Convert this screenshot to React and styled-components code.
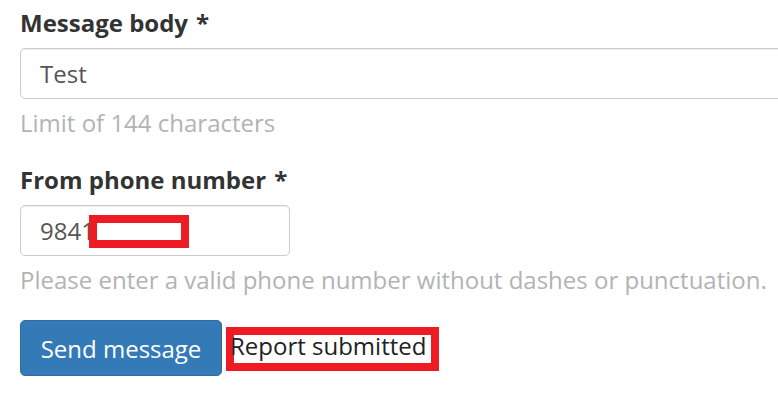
import React from "react";
import styled, { createGlobalStyle } from "styled-components";

const Global = createGlobalStyle`
  html, body { margin: 0; padding: 0; background: #fff; overflow: hidden; }
  body { font-family: "Open Sans", "Liberation Sans", sans-serif; }
`;

const Form = styled.form`
  display: flex;
  flex-direction: column;
  padding: 6px 0 0 20px;
  width: 900px;
`;

const Group = styled.div`
  display: flex;
  flex-direction: column;
  margin-bottom: ${(p) => p.$mb || 0}px;
`;

const Label = styled.label`
  font-weight: 700;
  font-size: 24px;
  line-height: 34px;
  color: #333;
  margin-bottom: 8px;
`;

const Req = styled.span`
  margin-left: 8px;
`;

const FieldWrap = styled.div`
  position: relative;
  width: ${(p) => p.$w}px;
`;

const Input = styled.input`
  box-sizing: border-box;
  width: 100%;
  height: 51px;
  padding: 0 19px;
  border: 1px solid #ccc;
  border-radius: 5px;
  box-shadow: inset 0 1px 1px rgba(0, 0, 0, 0.075);
  font-family: "Open Sans", "Liberation Sans", sans-serif;
  font-size: 24px;
  color: #555;
  background: #fff;
  outline: none;
`;

const Help = styled.div`
  font-size: 24px;
  line-height: 32px;
  color: #b3b3b3;
  margin-top: 8px;
`;

const Redact = styled.div`
  position: absolute;
  left: ${(p) => p.$x}px;
  top: ${(p) => p.$y}px;
  width: ${(p) => p.$w}px;
  height: ${(p) => p.$h}px;
  box-sizing: border-box;
  border: 8px solid #ed1c24;
  background: #fff;
`;

const Actions = styled.div`
  display: flex;
  align-items: flex-start;
  gap: 4px;
`;

const Button = styled.button`
  box-sizing: border-box;
  height: 56px;
  width: 202px;
  border: 1px solid #2e6da4;
  border-radius: 5px;
  background: #337ab7;
  color: #fff;
  font-family: "Open Sans", "Liberation Sans", sans-serif;
  font-size: 24px;
  padding: 0;
`;

const Status = styled.div`
  box-sizing: border-box;
  margin-top: 7px;
  height: 44px;
  width: 213px;
  border: 8px solid #ed1c24;
  background: #fff;
  display: flex;
  align-items: center;
  font-size: 24px;
  line-height: 28px;
  color: #222;
  white-space: nowrap;
  overflow: visible;
`;

const StatusText = styled.span`
  margin-left: -4px;
  margin-top: -6px;
`;

export default function App() {
  return (
    <>
      <Global />
      <Form onSubmit={(e) => e.preventDefault()}>
        <Group $mb={24}>
          <Label>
            Message body<Req>*</Req>
          </Label>
          <FieldWrap $w={800}>
            <Input defaultValue="Test" />
          </FieldWrap>
          <Help>Limit of 144 characters</Help>
        </Group>
        <Group $mb={24}>
          <Label>
            From phone number<Req>*</Req>
          </Label>
          <FieldWrap $w={270}>
            <Input defaultValue="9841" />
            <Redact $x={69} $y={10} $w={100} $h={33} />
          </FieldWrap>
          <Help>Please enter a valid phone number without dashes or punctuation.</Help>
        </Group>
        <Actions>
          <Button type="submit">Send message</Button>
          <Status>
            <StatusText>Report submitted</StatusText>
          </Status>
        </Actions>
      </Form>
    </>
  );
}
